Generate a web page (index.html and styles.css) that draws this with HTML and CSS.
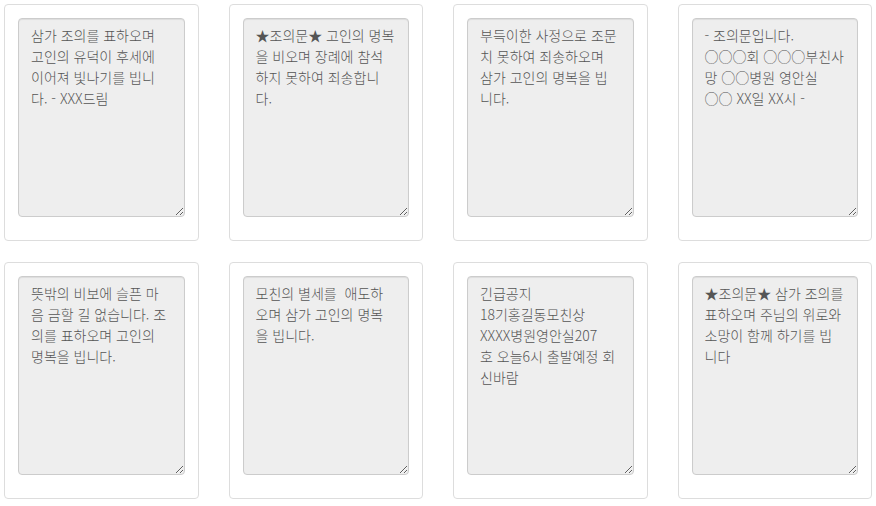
FILE: index.html
```html
<!DOCTYPE html>
<html lang="ko">
<head>
<meta charset="utf-8">
<title>조의문</title>
<link rel="stylesheet" href="styles.css">
</head>
<body>
<div class="grid">
  <div class="card"><textarea class="msg" readonly>삼가 조의를 표하오며
고인의 유덕이 후세에
이어져 빛나기를 빕니
다. - XXX드림</textarea></div>
  <div class="card"><textarea class="msg" readonly>★조의문★ 고인의 명복
을 비오며 장례에 참석
하지 못하여 죄송합니
다.</textarea></div>
  <div class="card"><textarea class="msg" readonly>부득이한 사정으로 조문
치 못하여 죄송하오며
삼가 고인의 명복을 빕
니다.</textarea></div>
  <div class="card"><textarea class="msg" readonly>- 조의문입니다.
○○○회 ○○○부친사
망 ○○병원 영안실
○○ XX일 XX시 -</textarea></div>
  <div class="card"><textarea class="msg" readonly>뜻밖의 비보에 슬픈 마
음 금할 길 없습니다. 조
의를 표하오며 고인의
명복을 빕니다.</textarea></div>
  <div class="card"><textarea class="msg" readonly>모친의 별세를  애도하
오며 삼가 고인의 명복
을 빕니다.</textarea></div>
  <div class="card"><textarea class="msg" readonly>긴급공지
18기홍길동모친상
XXXX병원영안실207
호 오늘6시 출발예정 회
신바람</textarea></div>
  <div class="card"><textarea class="msg" readonly>★조의문★ 삼가 조의를
표하오며 주님의 위로와
소망이 함께 하기를 빕
니다</textarea></div>
</div>
</body>
</html>
```

FILE: styles.css
```css
html, body {
  margin: 0;
  padding: 0;
  background: #fff;
  font-family: "Noto Sans CJK KR", "Noto Sans", sans-serif;
}

.grid {
  display: grid;
  grid-template-columns: repeat(4, 1fr);
  column-gap: 30px;
  row-gap: 21px;
  padding: 4px 4px 0 4px;
}

.card {
  box-sizing: border-box;
  border: 1px solid #dddddd;
  border-radius: 4px;
  background: #fff;
  padding: 13px 13px 23px 13px;
}

.msg {
  display: block;
  box-sizing: border-box;
  width: 100%;
  height: 199px;
  margin: 0;
  padding: 6px 12px;
  border: 1px solid #cccccc;
  border-radius: 4px;
  background: #eeeeee;
  color: #555555;
  font-family: "Noto Sans CJK KR", "Noto Sans", sans-serif;
  font-size: 14px;
  font-weight: 300;
  line-height: 21px;
  white-space: pre;
  overflow: hidden;
  resize: vertical;
  box-shadow: inset 0 1px 1px rgba(0, 0, 0, 0.075);
  outline: none;
}
```
